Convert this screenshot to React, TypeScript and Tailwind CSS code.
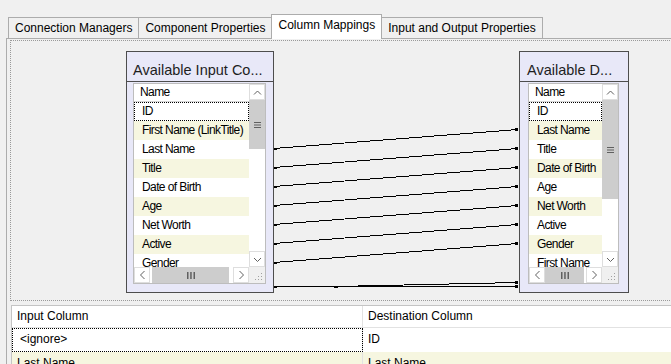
import React from 'react';

const leftRows = ['ID', 'First Name (LinkTitle)', 'Last Name', 'Title', 'Date of Birth', 'Age', 'Net Worth', 'Active', 'Gender'];
const rightRows = ['ID', 'Last Name', 'Title', 'Date of Birth', 'Age', 'Net Worth', 'Active', 'Gender', 'First Name'];

// mapping lines, page coordinates [x1, y1, x2, y2]
const links = [
  [274, 148, 518, 129],
  [274, 167, 518, 148],
  [274, 186, 518, 167],
  [274, 205, 518, 186],
  [274, 224, 518, 205],
  [274, 243, 518, 224],
  [274, 262, 518, 243],
  [274, 286, 518, 286],
  [335, 286, 518, 282],
];

function Chevron({ dir }: { dir: 'up' | 'down' | 'left' | 'right' }) {
  if (dir === 'up' || dir === 'down') {
    const d = dir === 'up' ? 'M1 5.5 L4.5 2 L8 5.5' : 'M1 2 L4.5 5.5 L8 2';
    return (
      <svg width="9" height="7" viewBox="0 0 9 7">
        <path d={d} fill="none" stroke="#606060" strokeWidth="1" />
      </svg>
    );
  }
  const d = dir === 'left' ? 'M5.5 1 L1.5 5 L5.5 9' : 'M1.5 1 L5.5 5 L1.5 9';
  return (
    <svg width="7" height="10" viewBox="0 0 7 10">
      <path d={d} fill="none" stroke="#606060" strokeWidth="1" />
    </svg>
  );
}

function ScrollBtn({ dir }: { dir: 'up' | 'down' | 'left' | 'right' }) {
  return (
    <div className="flex h-[16px] w-[16px] shrink-0 items-center justify-center border border-[#dedede] bg-white">
      <Chevron dir={dir} />
    </div>
  );
}

function ColumnList({
  rows,
  listCls,
  vThumbCls,
  hThumbCls,
}: {
  rows: string[];
  listCls: string;
  vThumbCls: string;
  hThumbCls: string;
}) {
  return (
    <div className={'flex h-[201px] flex-col border border-[#bdbdbd] bg-white ' + listCls}>
      <div className="flex h-[183px]">
        <div className="min-w-0 flex-1 overflow-hidden">
          <div className="h-[18px] border-b border-[#d6d6d6] pl-[6px] text-[12px] leading-[17px] tracking-[-0.6px] text-black">
            Name
          </div>
          {rows.map((r, i) => (
            <div
              key={r}
              className={
                'h-[19px] whitespace-nowrap pl-[8px] text-[12px] leading-[19px] tracking-[-0.6px] text-black ' +
                (i === 0 ? 'outline-1 -outline-offset-1 outline-dotted outline-black ' : '') +
                (i % 2 === 1 ? 'bg-[#f6f6e0]' : 'bg-white')
              }
            >
              {r}
            </div>
          ))}
        </div>
        <div className="flex w-[16px] flex-col">
          <ScrollBtn dir="up" />
          <div className={'flex w-[16px] items-center justify-center bg-[#cdcdcd] ' + vThumbCls}>
            <svg width="7" height="6" viewBox="0 0 7 6">
              <rect x="0" y="0" width="7" height="1" fill="#606060" />
              <rect x="0" y="2.5" width="7" height="1" fill="#606060" />
              <rect x="0" y="5" width="7" height="1" fill="#606060" />
            </svg>
          </div>
          <div className="flex-1 bg-white" />
          <ScrollBtn dir="down" />
        </div>
      </div>
      <div className="flex h-[16px]">
        <ScrollBtn dir="left" />
        <div className="flex min-w-0 flex-1 bg-white">
          <div className={'flex h-full items-center justify-center bg-[#cdcdcd] ' + hThumbCls}>
            <svg width="8" height="7" viewBox="0 0 8 7">
              <rect x="0" y="0" width="1.5" height="7" fill="#606060" />
              <rect x="3.2" y="0" width="1.5" height="7" fill="#606060" />
              <rect x="6.5" y="0" width="1.5" height="7" fill="#606060" />
            </svg>
          </div>
        </div>
        <ScrollBtn dir="right" />
        <div className="flex h-[16px] w-[16px] items-end justify-end bg-[#f0f0f0] p-[2px]">
          <svg width="8" height="8" viewBox="0 0 8 8">
            <rect x="6" y="0" width="1" height="1" fill="#a0a0a0" />
            <rect x="3" y="3" width="1" height="1" fill="#a0a0a0" />
            <rect x="6" y="3" width="1" height="1" fill="#a0a0a0" />
            <rect x="0" y="6" width="1" height="1" fill="#a0a0a0" />
            <rect x="3" y="6" width="1" height="1" fill="#a0a0a0" />
            <rect x="6" y="6" width="1" height="1" fill="#a0a0a0" />
          </svg>
        </div>
      </div>
    </div>
  );
}

function Tab({ label, active }: { label: string; active?: boolean }) {
  if (active) {
    return (
      <div className="relative z-10 -mb-px -ml-px h-[25px] border border-b-0 border-[#acacac] bg-white px-[6px] text-[12px] leading-[21px] text-black">
        {label}
      </div>
    );
  }
  return (
    <div className="-ml-px h-[21px] border border-b-0 border-[#acacac] bg-[#f0f0f0] px-[6px] text-[12px] leading-[20px] text-black first:ml-0">
      {label}
    </div>
  );
}

export default function App() {
  return (
    <div className="h-[364px] w-[671px] overflow-hidden bg-[#f0f0f0] font-['Liberation_Sans',Arial,sans-serif]">
      {/* tabs */}
      <div className="flex h-[38px] items-end pl-[8px]">
        <Tab label="Connection Managers" />
        <Tab label="Component Properties" />
        <Tab label="Column Mappings" active />
        <Tab label="Input and Output Properties" />
      </div>

      {/* tab page */}
      <div className="ml-[6px] h-[326px] w-[700px] border-l border-t border-[#acacac] pl-[3px] pt-[1px]">
        {/* mapping canvas */}
        <div className="relative h-[261px] w-[690px] border border-dotted border-[#9a9a9a]">
          <svg
            className="absolute left-0 top-0"
            width="660"
            height="259"
            viewBox="11 41 660 259"
            shapeRendering="crispEdges"
          >
            {links.map(([x1, y1, x2, y2], i) => (
              <g key={i}>
                <line x1={x1} y1={y1 + 0.5} x2={x2} y2={y2 + 0.5} stroke="#000" strokeWidth="1" />
                <rect x={x1 - 1} y={y1 - 0.5} width="4" height="2" fill="#000" />
                <rect x={x2 - 3} y={y2 - 1} width="3" height="3" fill="#000" />
              </g>
            ))}
          </svg>

          <div className="absolute left-[115px] top-[10px] h-[242px] w-[148px] border border-[#4d4d4d] bg-[#e8e8f8]">
            <div className="h-[30px] border-b border-[#4d4d4d] pl-[6px] pt-[10px] text-[14.5px] leading-[17px] text-[#1e1e1e]">
              Available Input Co...
            </div>
            <div className="pl-[6px] pt-[1px]">
              <ColumnList
                rows={leftRows}
                listCls="w-[133px]"
                vThumbCls="h-[49px]"
                hThumbCls="ml-[2px] w-[77px]"
              />
            </div>
          </div>

          <div className="absolute left-[508px] top-[10px] h-[242px] w-[110px] border border-[#4d4d4d] bg-[#e8e8f8]">
            <div className="h-[30px] border-b border-[#4d4d4d] pl-[7px] pt-[10px] text-[14.5px] leading-[17px] text-[#1e1e1e]">
              Available D...
            </div>
            <div className="pl-[8px] pt-[1px]">
              <ColumnList
                rows={rightRows}
                listCls="w-[91px]"
                vThumbCls="h-[99px]"
                hThumbCls="w-[39px]"
              />
            </div>
          </div>
        </div>

        {/* mapping grid */}
        <div className="ml-[1px] mt-[4px] w-[700px] border-l border-t border-[#c4c4c4] text-[12px] text-black">
          <div className="flex h-[22px] border-b border-[#e2e2e2] bg-white">
            <div className="w-[351px] border-r border-[#e2e2e2] pl-[5px] leading-[21px]">Input Column</div>
            <div className="flex-1 pl-[5px] leading-[21px]">Destination Column</div>
          </div>
          <div className="flex h-[24px] bg-white">
            <div className="w-[351px] border-r border-[#e2e2e2] pl-[8px] leading-[23px] outline-1 -outline-offset-1 outline-dotted outline-black">
              &lt;ignore&gt;
            </div>
            <div className="flex-1 pl-[5px] leading-[23px]">ID</div>
          </div>
          <div className="flex h-[24px] bg-[#f6f6e0]">
            <div className="w-[351px] border-r border-[#e2e2e2] pl-[5px] leading-[23px]">Last Name</div>
            <div className="flex-1 pl-[5px] leading-[23px]">Last Name</div>
          </div>
        </div>
      </div>
    </div>
  );
}
